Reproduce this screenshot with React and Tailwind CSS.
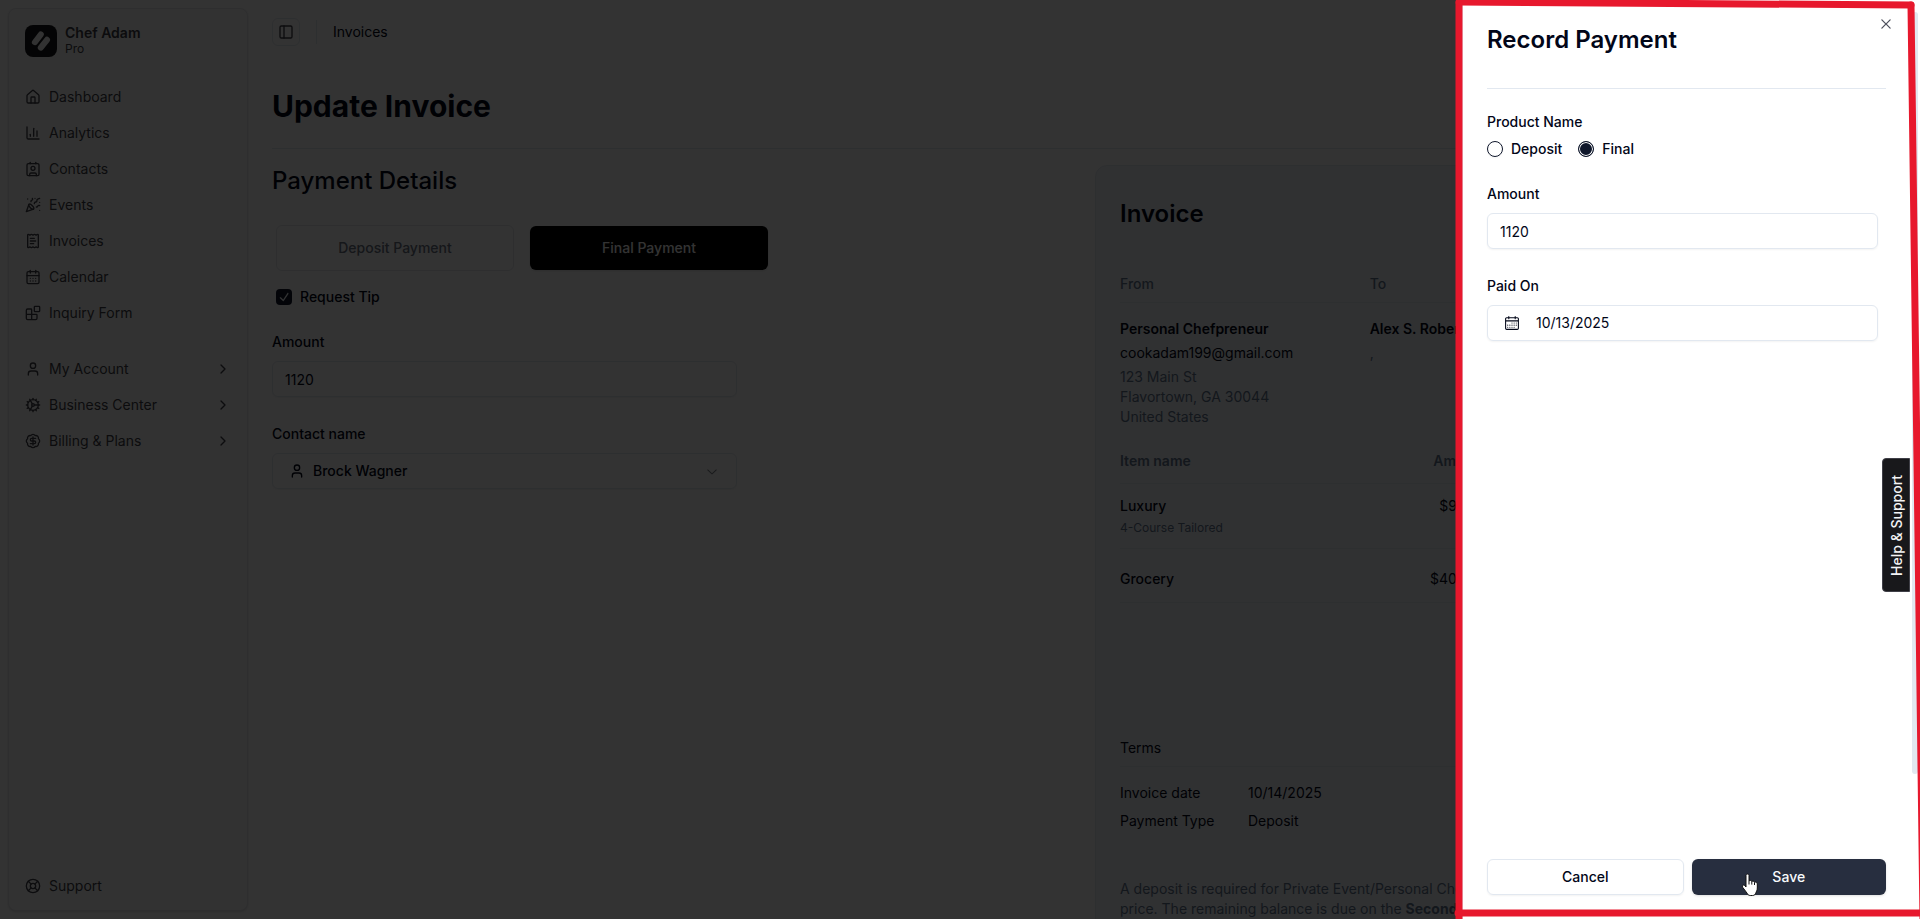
import React, { useState } from "react";
import {
  BadgeDollarSign,
  Blocks,
  CalendarDays,
  ChartColumn,
  ChevronRight,
  Cog,
  Contact,
  House,
  LifeBuoy,
  PanelLeft,
  PartyPopper,
  ReceiptText,
  User,
} from "lucide-react";
import { RxCalendar, RxCheck, RxChevronDown, RxCross2 } from "react-icons/rx";

const mainLinks = [
  { label: "Dashboard", icon: House },
  { label: "Analytics", icon: ChartColumn },
  { label: "Contacts", icon: Contact },
  { label: "Events", icon: PartyPopper },
  { label: "Invoices", icon: ReceiptText },
  { label: "Calendar", icon: CalendarDays },
  { label: "Inquiry Form", icon: Blocks },
];

const groupLinks = [
  { label: "My Account", icon: User },
  { label: "Business Center", icon: Cog },
  { label: "Billing & Plans", icon: BadgeDollarSign },
];

// ===== SIDEBAR =====
const Logo = () => (
  <span className="flex h-8 w-8 items-center justify-center rounded-lg bg-zinc-900">
    <svg viewBox="0 0 32 32" className="h-8 w-8" fill="none" aria-hidden="true">
      <g stroke="#fafafa" strokeWidth="6" strokeLinecap="round">
        <path d="M9.900 17.200 15.800 9.500" />
        <path d="M15.800 22.600 22 14.800" />
      </g>
    </svg>
  </span>
);

const NavLink = ({ label, icon: Icon, expandable }) => (
  <a
    href="#"
    className="flex h-8 items-center gap-2 rounded-md px-2 text-sm text-zinc-700"
  >
    <Icon className="h-4 w-4 shrink-0" />
    <span className="flex-1">{label}</span>
    {expandable && <ChevronRight className="h-4 w-4" />}
  </a>
);

const Sidebar = () => (
  <aside className="flex w-64 shrink-0 p-2">
    <div className="flex flex-1 flex-col rounded-lg border border-gray-200 bg-neutral-50 shadow-sm">
      <div className="p-2">
        <a href="#" className="flex h-12 items-center gap-2 p-2 text-zinc-700">
          <Logo />
          <span className="flex flex-col">
            <span className="text-sm leading-4 font-semibold">Chef Adam</span>
            <span className="text-xs leading-4">Pro</span>
          </span>
        </a>
      </div>
      <nav className="flex flex-1 flex-col gap-2">
        <div className="flex flex-col gap-1 p-2">
          {mainLinks.map((el) => (
            <NavLink key={el.label} {...el} />
          ))}
        </div>
        <div className="flex flex-col gap-1 p-2">
          {groupLinks.map((el) => (
            <NavLink key={el.label} {...el} expandable />
          ))}
        </div>
      </nav>
      <div className="p-2">
        <NavLink label="Support" icon={LifeBuoy} />
      </div>
    </div>
  </aside>
);

// ===== PAYMENT FORM =====
const PaymentDetails = () => (
  <section>
    <h2 className="text-2xl font-medium">Payment Details</h2>
    <div className="mt-7 flex items-center gap-4 px-1">
      <button className="h-[46px] w-[238px] rounded-md border border-gray-200 text-sm font-medium text-gray-500">
        Deposit Payment
      </button>
      <button className="h-11 w-[238px] rounded-md bg-black text-sm font-medium text-white shadow-sm">
        Final Payment
      </button>
    </div>
    <label className="mt-[18px] flex items-center gap-2 px-1 text-sm leading-4 font-medium">
      <span className="relative flex h-4 w-4">
        <input
          type="checkbox"
          defaultChecked
          className="h-4 w-4 appearance-none rounded bg-slate-900"
        />
        <RxCheck className="pointer-events-none absolute inset-0 h-4 w-4 text-slate-50" />
      </span>
      Request Tip
    </label>
    <div className="mt-[30px] flex max-w-[465px] flex-col">
      <label
        htmlFor="invoice-amount"
        className="text-sm leading-none font-medium"
      >
        Amount
      </label>
      <input
        id="invoice-amount"
        defaultValue="1120"
        className="mt-3 h-9 rounded-md border border-slate-200 px-3 text-sm shadow-xs"
      />
      <span
        id="contact-label"
        className="mt-[30px] text-sm leading-none font-medium"
      >
        Contact name
      </span>
      <button
        aria-labelledby="contact-label"
        className="mt-3 flex h-9 items-center gap-2 rounded-md border border-slate-200 px-4 text-sm font-medium shadow-xs"
      >
        <User className="h-4 w-4" />
        <span className="flex-1 text-left">Brock Wagner</span>
        <RxChevronDown className="h-4 w-4 opacity-50" />
      </button>
    </div>
  </section>
);

// ===== INVOICE PREVIEW =====
const InvoicePreview = () => (
  <section className="rounded-xl border border-slate-200 bg-slate-100 p-6 text-sm">
    <h2 className="pt-2 text-2xl font-semibold">Invoice</h2>
    <div className="mt-11 grid grid-cols-3 border-b border-slate-200 pb-2 font-medium text-slate-500">
      <span>From</span>
      <span>To</span>
    </div>
    <div className="mt-4 grid grid-cols-3">
      <div>
        <p className="font-semibold">Personal Chefpreneur</p>
        <p className="mt-1">cookadam199@gmail.com</p>
        <address className="mt-1 text-slate-500 not-italic">
          123 Main St
          <br />
          Flavortown, GA 30044
          <br />
          United States
        </address>
      </div>
      <div>
        <p className="font-semibold">Alex S. Roberts</p>
        <p className="mt-1 text-slate-500">,</p>
      </div>
    </div>
    <table className="mt-3 w-full">
      <thead>
        <tr className="h-11 border-b border-slate-200 text-slate-500">
          <th className="w-1/3 text-left font-semibold">Item name</th>
          <th className="w-[117px] text-right font-semibold">Amount</th>
          <th />
        </tr>
      </thead>
      <tbody>
        <tr className="border-b border-slate-200">
          <td className="pt-3 pb-3 font-medium">
            Luxury
            <p className="mt-1 text-xs font-normal text-slate-500">
              4-Course Tailored
            </p>
          </td>
          <td className="pt-3 text-right align-top">$90.00</td>
          <td />
        </tr>
        <tr className="h-[54px] border-b border-slate-200">
          <td className="pt-2 font-medium">Grocery</td>
          <td className="pt-2 text-right">$400.00</td>
          <td />
        </tr>
      </tbody>
    </table>
    <h3 className="mt-[135px] border-b border-slate-200 pb-2">Terms</h3>
    <dl className="mt-4 grid grid-cols-[120px_1fr] gap-x-2 gap-y-2">
      <dt>Invoice date</dt>
      <dd>10/14/2025</dd>
      <dt>Payment Type</dt>
      <dd>Deposit</dd>
    </dl>
    <p className="mt-12 text-slate-500">
      A deposit is required for Private Event/Personal Chef services
      <br />
      price. The remaining balance is due on the <b>Second payment date</b>
    </p>
  </section>
);

// ===== RECORD PAYMENT DRAWER =====
const RadioOption = ({ label, value, onChange }) => (
  <label className="flex items-center gap-2 text-sm leading-4 font-medium">
    <input
      type="radio"
      name="product"
      checked={value === label}
      onChange={() => onChange(label)}
      className="h-4 w-4 appearance-none rounded-full border border-slate-900 shadow-xs checked:border-slate-900 checked:bg-slate-900 checked:shadow-[inset_0_0_0_1px_#fff]"
    />
    {label}
  </label>
);

const RecordPayment = () => {
  const [product, setProduct] = useState("Final");

  return (
    <div
      role="dialog"
      aria-labelledby="drawer-title"
      className="absolute inset-y-0 right-[10px] flex w-full max-w-md flex-col border-l border-slate-200 bg-white p-6 text-slate-950 shadow-lg"
    >
      <button
        aria-label="Close"
        className="absolute top-4 right-4 text-slate-950 opacity-70"
      >
        <RxCross2 className="h-4 w-4" />
      </button>
      <h2
        id="drawer-title"
        className="border-b border-slate-200 pb-8 text-2xl font-semibold"
      >
        Record Payment
      </h2>

      <fieldset className="mt-[26px]">
        <legend className="text-sm leading-none font-medium">
          Product Name
        </legend>
        <div className="mt-3 flex gap-4">
          <RadioOption label="Deposit" value={product} onChange={setProduct} />
          <RadioOption label="Final" value={product} onChange={setProduct} />
        </div>
      </fieldset>

      <div className="mt-[30px] flex flex-col pr-2">
        <label
          htmlFor="record-amount"
          className="text-sm leading-none font-medium"
        >
          Amount
        </label>
        <input
          id="record-amount"
          defaultValue="1120"
          className="mt-3 h-9 rounded-md border border-slate-200 px-3 text-sm shadow-xs"
        />
        <span
          id="paid-label"
          className="mt-[30px] text-sm leading-none font-medium"
        >
          Paid On
        </span>
        <button
          aria-labelledby="paid-label"
          className="mt-3 flex h-9 items-center gap-4 rounded-md border border-slate-200 px-4 text-sm shadow-xs"
        >
          <RxCalendar className="h-4 w-4" />
          10/13/2025
        </button>
      </div>

      <div className="mt-auto flex gap-2">
        <button className="h-9 flex-1 rounded-md border border-slate-200 px-4 text-sm font-medium shadow-xs">
          Cancel
        </button>
        <button className="h-9 flex-1 rounded-md bg-[#272e3f] px-4 text-sm font-medium text-slate-50 shadow-sm">
          Save
        </button>
      </div>
    </div>
  );
};

// Hand cursor resting on the save button
const HandCursor = () => (
  <svg
    viewBox="0 0 18 24"
    className="pointer-events-none absolute right-[161px] bottom-[22px] h-6 w-[18px]"
    aria-hidden="true"
  >
    <path
      d="M5 2.5C5 .6 8 .6 8 2.5V8c.6-.9 2.6-.7 2.8.6.8-.8 2.6-.4 2.7.8 1-.7 2.8-.1 2.8 1.5V15c0 2.4-1 3.4-1.4 4.8-.4 1.6-1.5 2.7-3.4 2.7H9.300c-1.500 0-2.300-.8-3-2L1.600 14.200c-1-1.700.8-2.900 2-1.700L5 14Z"
      fill="#fff"
      stroke="#111"
      strokeWidth="1"
      strokeLinejoin="round"
    />
    <path d="M8 8v3.500M10.800 8.600v3M13.500 9.500v2.500" stroke="#111" strokeWidth="1" />
  </svg>
);

// Hand-drawn red marker around the drawer
const Marker = () => (
  <svg
    viewBox="0 0 470 919"
    preserveAspectRatio="none"
    className="pointer-events-none absolute inset-y-0 right-0 h-full w-[470px]"
    fill="none"
    stroke="#e7182d"
    strokeWidth="7"
    strokeLinecap="round"
    aria-hidden="true"
  >
    <path d="M9 3V923" />
    <path d="M9 2 461 5" />
    <path d="M461 5 473 919" />
    <path d="M8 913H480" />
  </svg>
);

const App = () => {
  return (
    <div className="relative flex h-screen overflow-hidden bg-white font-[Inter,sans-serif] text-slate-950">
      <Sidebar />
      <main className="min-w-0 flex-1 px-4">
        <header className="flex h-16 items-center gap-4">
          <button
            aria-label="Toggle sidebar"
            className="flex h-7 w-7 items-center justify-center rounded-md border border-slate-200 text-zinc-700"
          >
            <PanelLeft className="h-4 w-4" />
          </button>
          <span className="h-6 w-px bg-slate-200" />
          <a href="#" className="text-sm">
            Invoices
          </a>
        </header>
        <h1 className="border-b border-slate-200 pt-6 pb-6 text-3xl font-bold">
          Update Invoice
        </h1>
        <div className="grid grid-cols-2 gap-6 pt-4">
          <PaymentDetails />
          <InvoicePreview />
        </div>
      </main>
      {/* page scrollbar */}
      <div className="z-10 flex w-[10px] shrink-0 flex-col items-center bg-white pt-3">
        <div className="h-[84%] w-[6px] rounded-full bg-slate-200" />
      </div>

      <div className="absolute inset-y-0 right-[10px] left-0 bg-black/80" />
      <RecordPayment />
      <button className="absolute top-1/2 right-[10px] h-[134px] w-7 -translate-y-0.5 rotate-180 rounded-r border border-zinc-700 bg-zinc-900 pr-0.5 text-sm font-medium text-zinc-100 [writing-mode:vertical-rl]">
        Help &amp; Support
      </button>
      <div className="pointer-events-none absolute inset-0 z-20">
        <Marker />
        <HandCursor />
      </div>
    </div>
  );
};

export default App;
